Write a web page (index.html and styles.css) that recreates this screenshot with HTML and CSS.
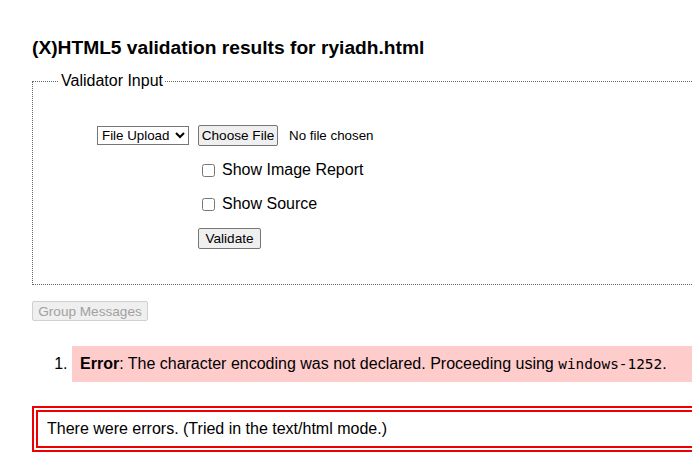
FILE: index.html
```html
<!DOCTYPE html>
<html lang="en">
<head>
<meta charset="utf-8">
<title>Validation results</title>
<link rel="stylesheet" href="styles.css">
</head>
<body>
<div class="page">
  <h1 class="title">(X)HTML5 validation results for ryiadh.html</h1>
  <form class="input-form">
    <fieldset class="validator">
      <legend class="legend">Validator Input</legend>
      <div class="rows">
        <div class="cell-left">
          <select class="mode-select"><option>File Upload</option></select>
        </div>
        <div class="cell-right file-row">
          <button type="button" class="btn file-btn">Choose File</button>
          <span class="nofile">No file chosen</span>
        </div>
        <div class="cell-left"></div>
        <label class="cell-right check-row"><input type="checkbox" class="check"> Show Image Report</label>
        <div class="cell-left"></div>
        <label class="cell-right check-row"><input type="checkbox" class="check"> Show Source</label>
        <div class="cell-left"></div>
        <div class="cell-right btn-row"><button type="button" class="btn validate-btn">Validate</button></div>
      </div>
    </fieldset>
  </form>
  <button type="button" class="btn group-btn" disabled>Group Messages</button>
  <ol class="messages">
    <li class="error"><strong>Error</strong>: The character encoding was not declared. Proceeding using <code class="mono">windows-1252</code>.</li>
  </ol>
  <p class="failure">There were errors. (Tried in the text/html mode.)</p>
</div>
</body>
</html>
```
FILE: styles.css
```css
html {
  overflow: hidden;
}
body {
  margin: 0;
  font-family: "Liberation Sans", Arial, sans-serif;
  color: #000;
  background: #fff;
}
.page {
  width: 1000px;
  padding: 0 32px;
}
.title {
  font-size: 19.2px;
  font-weight: bold;
  margin: 0;
  padding-top: 37px;
  line-height: 22px;
}
.input-form {
  margin: 0;
}
.validator {
  margin: 13px 0 0 0;
  padding: 0 0 29px 0;
  border: 1px dotted #666;
}
.legend {
  margin-left: 26px;
  padding: 0 2px;
  font-size: 16px;
  line-height: 18px;
}
.rows {
  display: grid;
  grid-template-columns: 156px auto;
  column-gap: 9px;
  row-gap: 0;
  padding-top: 27px;
  align-items: center;
}
.cell-left {
  text-align: right;
}
.file-row {
  display: flex;
  align-items: center;
  height: 36px;
  font-size: 13.33px;
}
.mode-select {
  font-family: "Liberation Sans", Arial, sans-serif;
  font-size: 13.33px;
  width: 92px;
  height: 19px;
  padding: 0;
  border: 1px solid #767676;
  border-radius: 0;
  background: #fff;
  color: #000;
}
.btn {
  font-family: "Liberation Sans", Arial, sans-serif;
  font-size: 13.6px;
  height: 21px;
  padding: 1px 6px;
  border: 1px solid #767676;
  border-radius: 2px;
  background: #efefef;
  color: #000;
}
.file-btn {
  width: 80px;
  padding: 1px 0;
}
.validate-btn {
  width: 63px;
  padding: 1px 0;
}
.nofile {
  margin-left: 11px;
}
.check-row {
  display: flex;
  align-items: center;
  height: 34px;
  font-size: 16px;
}
.check {
  width: 13px;
  height: 13px;
  margin: 0 7px 0 4px;
}
.btn-row {
  height: 34px;
  display: flex;
  align-items: center;
}
.group-btn {
  display: block;
  margin-top: 16px;
  width: 116px;
  height: 20px;
  padding: 1px 0;
  color: #a0a0a0;
  border-color: #d0d0d0;
  background: #efefef;
}
.messages {
  margin: 25px 0 0 0;
  padding-left: 40px;
}
.error {
  background: #fcc;
  padding: 8px 8px;
  font-size: 16px;
  line-height: 19px;
}
.mono {
  font-family: "DejaVu Sans Mono", monospace;
  font-size: 14.4px;
}
.failure {
  margin: 24px 0 0 0;
  border: 6px double #e00;
  padding: 8px 9px;
  font-size: 16px;
  line-height: 18px;
}
```
